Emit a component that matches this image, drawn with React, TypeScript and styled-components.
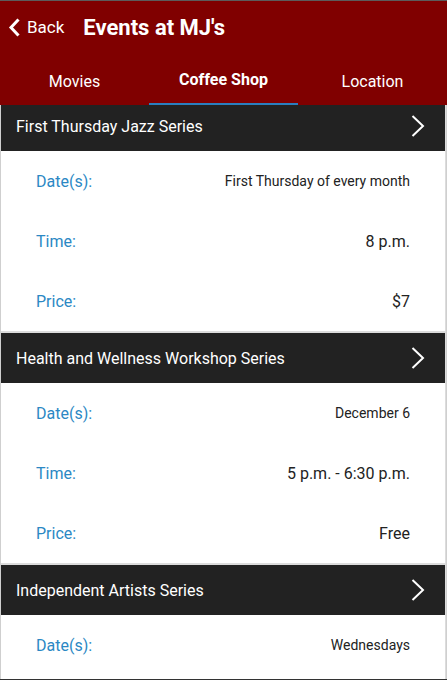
import React from "react";
import styled, { createGlobalStyle } from "styled-components";

const Global = createGlobalStyle`
  html, body { margin: 0; padding: 0; background: #fff; }
  body { font-family: Roboto, "Liberation Sans", Arial, sans-serif; }
  * { box-sizing: border-box; }
`;

const Page = styled.div`
  width: 447px;
  height: 680px;
  overflow: hidden;
  display: flex;
  flex-direction: column;
  border-top: 1px solid #5c5c5c;
  border-bottom: 1px solid #333;
  background: #fff;
`;

const Header = styled.header`
  background: #800000;
  color: #fff;
  display: flex;
  flex-direction: column;
`;

const TitleRow = styled.div`
  height: 53px;
  display: flex;
  align-items: center;
  padding-left: 8px;
  padding-bottom: 1px;
`;

const BackButton = styled.button`
  display: flex;
  align-items: center;
  gap: 6px;
  background: none;
  border: none;
  padding: 0;
  color: #fff;
  font: 400 17px Roboto, "Liberation Sans", Arial, sans-serif;
  cursor: pointer;
`;

const Title = styled.h1`
  margin: 0 0 0 19px;
  font: 700 22px Roboto, "Liberation Sans", Arial, sans-serif;
  color: #fff;
`;

const Tabs = styled.nav`
  height: 51px;
  display: grid;
  grid-template-columns: 149px 149px 149px;
`;

const Tab = styled.div<{ $active?: boolean }>`
  display: flex;
  align-items: center;
  justify-content: center;
  font-size: 16px;
  font-weight: ${(p) => (p.$active ? 700 : 400)};
  padding-top: ${(p) => (p.$active ? "1px" : "5px")};
  border-bottom: 2px solid ${(p) => (p.$active ? "#2a7fc0" : "transparent")};
`;

const List = styled.main`
  flex: 1;
  display: flex;
  flex-direction: column;
  gap: 2px;
  background: #dcdcdc;
  border-left: 1px solid #cfcfcf;
  border-right: 1px solid #cfcfcf;
  padding-right: 1px;
`;

const Section = styled.section`
  display: flex;
  flex-direction: column;
  background: #fff;
`;

const LastSection = styled(Section)`
  flex: 1;
`;

const SectionHeader = styled.div<{ $clipped?: boolean }>`
  height: ${(p) => (p.$clipped ? "46px" : "50px")};
  padding-bottom: ${(p) => (p.$clipped ? "4px" : "0")};
  background: #222;
  color: #fff;
  display: flex;
  align-items: center;
  justify-content: space-between;
  padding-left: 15px;
  padding-right: 20px;
  font-size: 16px;
`;

const Row = styled.div`
  height: 60px;
  display: flex;
  align-items: center;
  justify-content: space-between;
  padding-left: 35px;
  padding-right: 35px;
`;

const Label = styled.span`
  color: #2b88c4;
  font-size: 16px;
`;

const Value = styled.span<{ $small?: boolean }>`
  color: #222;
  font-size: ${(p) => (p.$small ? "14px" : "16px")};
`;

const BackChevron = () => (
  <svg width="13" height="19" viewBox="0 0 13 19">
    <path d="M10.5 1.5 L3 9.5 L10.5 17.5" fill="none" stroke="#fff" strokeWidth="3" />
  </svg>
);

const RightChevron = () => (
  <svg width="14" height="22" viewBox="0 0 14 22">
    <path d="M1.5 1 L12 11 L1.5 21" fill="none" stroke="#fff" strokeWidth="2" />
  </svg>
);

type Item = { label: string; value: string; small?: boolean };
type Event = { title: string; rows: Item[] };

const events: Event[] = [
  {
    title: "First Thursday Jazz Series",
    rows: [
      { label: "Date(s):", value: "First Thursday of every month", small: true },
      { label: "Time:", value: "8 p.m." },
      { label: "Price:", value: "$7" },
    ],
  },
  {
    title: "Health and Wellness Workshop Series",
    rows: [
      { label: "Date(s):", value: "December 6", small: true },
      { label: "Time:", value: "5 p.m. - 6:30 p.m." },
      { label: "Price:", value: "Free" },
    ],
  },
  {
    title: "Independent Artists Series",
    rows: [{ label: "Date(s):", value: "Wednesdays", small: true }],
  },
];

export default function App() {
  return (
    <>
      <Global />
      <Page>
        <Header>
          <TitleRow>
            <BackButton>
              <BackChevron />
              Back
            </BackButton>
            <Title>Events at MJ's</Title>
          </TitleRow>
          <Tabs>
            <Tab>Movies</Tab>
            <Tab $active>Coffee Shop</Tab>
            <Tab>Location</Tab>
          </Tabs>
        </Header>
        <List>
          {events.map((ev, i) => {
            const S = i === events.length - 1 ? LastSection : Section;
            return (
              <S key={ev.title}>
                <SectionHeader $clipped={i === 0}>
                  <span>{ev.title}</span>
                  <RightChevron />
                </SectionHeader>
                {ev.rows.map((r) => (
                  <Row key={r.label}>
                    <Label>{r.label}</Label>
                    <Value $small={r.small}>{r.value}</Value>
                  </Row>
                ))}
              </S>
            );
          })}
        </List>
      </Page>
    </>
  );
}
